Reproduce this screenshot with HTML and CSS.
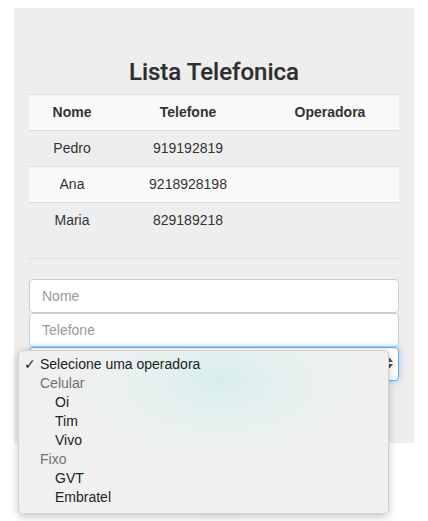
FILE: index.html
```html
<!DOCTYPE html>
<html lang="pt">
<head>
<meta charset="utf-8">
<title>Lista Telefonica</title>
<link rel="stylesheet" href="styles.css">
</head>
<body>
<div class="panel">
  <h3 class="title">Lista Telefonica</h3>
  <table class="table">
    <colgroup><col class="c1"><col class="c2"><col class="c3"></colgroup>
    <thead>
      <tr class="head"><th>Nome</th><th>Telefone</th><th>Operadora</th></tr>
    </thead>
    <tbody>
      <tr><td>Pedro</td><td>919192819</td><td></td></tr>
      <tr class="striped"><td>Ana</td><td>9218928198</td><td></td></tr>
      <tr><td>Maria</td><td>829189218</td><td></td></tr>
    </tbody>
  </table>
  <hr class="sep">
  <div class="form">
    <div class="control"><span class="placeholder">Nome</span></div>
    <div class="control"><span class="placeholder">Telefone</span></div>
    <div class="select-wrap">
      <div class="control select">
        <svg class="arrows" width="7" height="12" viewBox="0 0 7 12"><polygon points="0,5 3.5,0.5 7,5" fill="#505050"/><polygon points="0,7 3.5,11.5 7,7" fill="#505050"/></svg>
      </div>
      <ul class="popup">
        <li class="item top"><span class="check">✓</span>Selecione uma operadora</li>
        <li class="item group">Celular</li>
        <li class="item opt">Oi</li>
        <li class="item opt">Tim</li>
        <li class="item opt">Vivo</li>
        <li class="item group">Fixo</li>
        <li class="item opt">GVT</li>
        <li class="item opt">Embratel</li>
      </ul>
    </div>
  </div>
</div>
</body>
</html>
```

FILE: styles.css
```css
html, body {
  margin: 0;
  padding: 0;
  background: #fff;
}
body {
  min-height: 521px;
  padding-top: 8px;
  box-sizing: border-box;
  font-family: "Liberation Sans", Arial, sans-serif;
  font-size: 14px;
  color: #333;
}
.panel {
  margin: 0 0 0 14px;
  width: 400px;
  box-sizing: border-box;
  padding: 51px 15px 62px;
  background: #eeeeee;
}
.title {
  margin: 0 0 9px;
  font-family: Roboto, "Liberation Sans", sans-serif;
  font-weight: 500;
  font-size: 24px;
  line-height: 26px;
  text-align: center;
  color: #2e2e2e;
  -webkit-text-stroke: 0.2px #2e2e2e;
}
.table {
  width: 370px;
  border-collapse: collapse;
  table-layout: fixed;
}
.c1 { width: 86px; }
.c2 { width: 146px; }
.c3 { width: 138px; }
.table th, .table td {
  padding: 8px;
  line-height: 19px;
  border-top: 1px solid #dddddd;
  text-align: center;
  font-size: 14px;
}
.table th { font-weight: bold; }
.head, .striped { background: #f9f9f9; }
.sep {
  margin: 20px 0;
  border: 0;
  border-top: 1px solid #dddddd;
  height: 0;
}
.form {
  display: flex;
  flex-direction: column;
}
.control {
  height: 34px;
  box-sizing: border-box;
  border: 1px solid #cccccc;
  border-radius: 4px;
  background: #fff;
  padding: 6px 12px;
  line-height: 20px;
  display: flex;
  align-items: center;
}
.placeholder { color: #999; }
.select-wrap { position: relative; }
.select {
  border-color: #66afe9;
  box-shadow: inset 0 1px 1px rgba(0,0,0,.075), 0 0 6px rgba(102,175,233,.6);
  justify-content: flex-end;
  padding-right: 5px;
}
.arrows { display: block; margin-top: -3px; }
.popup {
  position: absolute;
  z-index: 10;
  left: -11px;
  top: 3px;
  width: 371px;
  box-sizing: border-box;
  margin: 0;
  padding: 4px 0 6px;
  list-style: none;
  border-radius: 5px;
  border: 1px solid rgba(0,0,0,.13);
  background: radial-gradient(ellipse 150px 80px at 200px 30px, #d7edec 0%, #e6f1f0 45%, #f0f0f0 100%);
  box-shadow: 0 3px 9px rgba(0,0,0,.22);
  color: #222;
}
.item {
  height: 19px;
  line-height: 19px;
  font-size: 14px;
  padding-left: 21px;
  position: relative;
  white-space: nowrap;
}
.check {
  position: absolute;
  left: 5px;
  top: 0;
  font-family: "DejaVu Sans", sans-serif;
  font-size: 14px;
}
.group { color: #707070; }
.opt { padding-left: 36px; }
```
